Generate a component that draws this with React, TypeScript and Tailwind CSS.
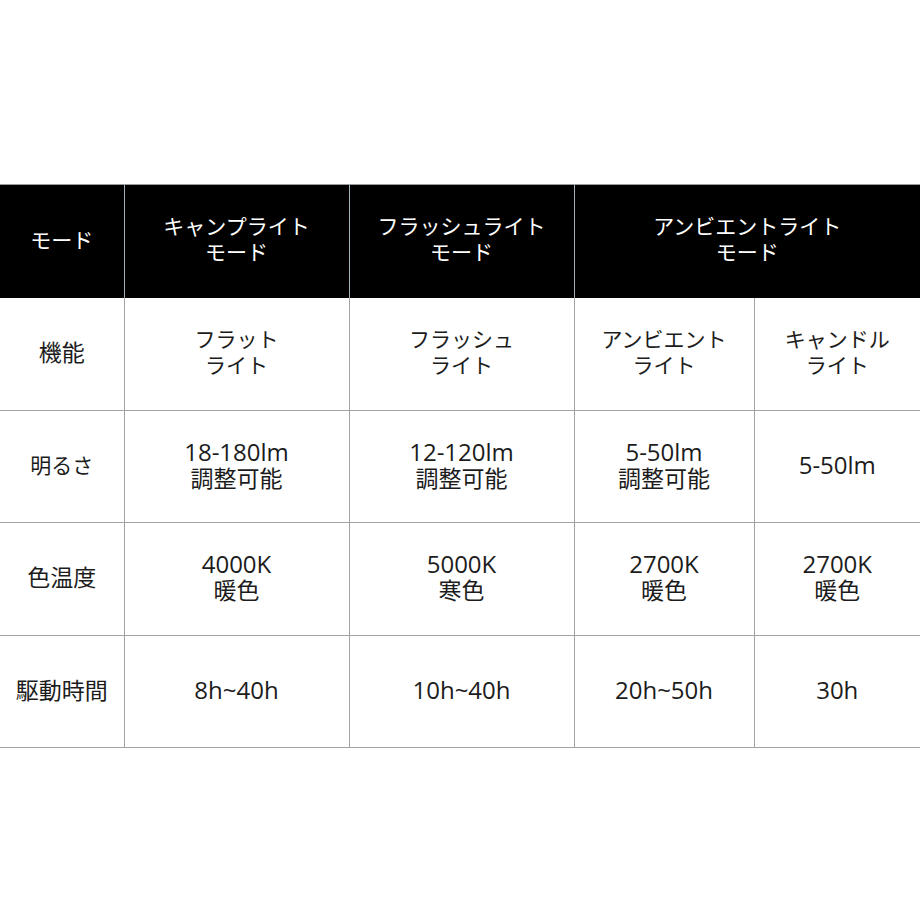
import React from "react";

const font = { fontFamily: '"Open Sans", "Noto Sans CJK JP", sans-serif' };

function sizeFor(t: string) {
  if (/^[\x00-\x7F]+$/.test(t)) return "text-[24px]";
  if (/^[\u4e00-\u9fff]+$/.test(t)) return "text-[23px]";
  return "text-[21px]";
}

function Cell({ lines, className = "" }: { lines: string[]; className?: string }) {
  return (
    <td className={`border-r border-b border-[#a3a3a3] text-center align-middle p-0 ${className}`}>
      <div className="flex flex-col items-center justify-center leading-[26px] pb-[4px]">
        {lines.map((l, i) => (
          <span key={i} className={sizeFor(l)}>{l}</span>
        ))}
      </div>
    </td>
  );
}

export default function App() {
  const rows: { label: string; cells: string[][]; h: string }[] = [
    { label: "機能", cells: [["フラット", "ライト"], ["フラッシュ", "ライト"], ["アンビエント", "ライト"], ["キャンドル", "ライト"]], h: "h-[113px]" },
    { label: "明るさ", cells: [["18-180lm", "調整可能"], ["12-120lm", "調整可能"], ["5-50lm", "調整可能"], ["5-50lm"]], h: "h-[112px]" },
    { label: "色温度", cells: [["4000K", "暖色"], ["5000K", "寒色"], ["2700K", "暖色"], ["2700K", "暖色"]], h: "h-[113px]" },
    { label: "駆動時間", cells: [["8h~40h"], ["10h~40h"], ["20h~50h"], ["30h"]], h: "h-[112px]" },
  ];
  return (
    <div className="w-[920px] h-[920px] bg-white pt-[184px]" style={font}>
      <table className="w-[920px] table-fixed border-collapse text-[22px] text-[#1c1c1c]">
        <colgroup>
          <col className="w-[124px]" />
          <col className="w-[225px]" />
          <col className="w-[225px]" />
          <col className="w-[180px]" />
          <col className="w-[166px]" />
        </colgroup>
        <thead>
          <tr className="h-[113px] bg-black text-white text-[21px] border-t border-[#9a9a9a]">
            <th className="border-r border-[#9fb0b8] font-normal p-0 leading-[26px]">
              <div className="pb-[2px]">モード</div>
            </th>
            <th className="border-r border-[#9fb0b8] font-normal p-0 leading-[26px]">
              <div className="flex flex-col items-center pb-[4px]"><span>キャンプライト</span><span>モード</span></div>
            </th>
            <th className="border-r border-[#9fb0b8] font-normal p-0 leading-[26px]">
              <div className="flex flex-col items-center pb-[4px]"><span>フラッシュライト</span><span>モード</span></div>
            </th>
            <th colSpan={2} className="font-normal p-0 leading-[26px]">
              <div className="flex flex-col items-center pb-[4px]"><span>アンビエントライト</span><span>モード</span></div>
            </th>
          </tr>
        </thead>
        <tbody>
          {rows.map((r) => (
            <tr key={r.label} className={r.h}>
              <Cell lines={[r.label]} />
              {r.cells.map((c, i) => (
                <Cell key={i} lines={c} className={i === 3 ? "border-r-0" : ""} />
              ))}
            </tr>
          ))}
        </tbody>
      </table>
    </div>
  );
}
